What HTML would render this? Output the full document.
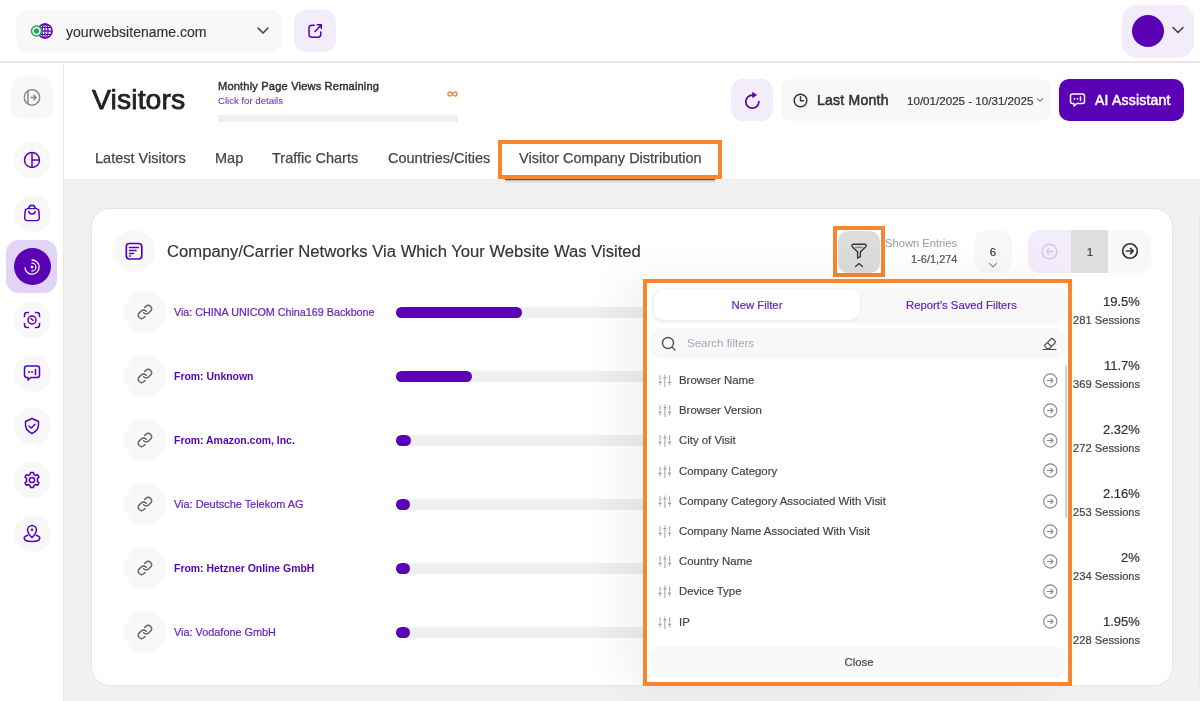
<!DOCTYPE html>
<html><head><meta charset="utf-8"><style>
html,body{margin:0;padding:0;}
body{width:1200px;height:701px;overflow:hidden;position:relative;background:#fff;font-family:"Liberation Sans",sans-serif;}
.t{position:absolute;line-height:0;white-space:nowrap;will-change:transform;}
.b{position:absolute;box-sizing:border-box;}
</style></head><body>
<div class="b" style="left:0px;top:61.4px;width:1200px;height:1.4px;background:#e8e8e8;border-radius:0px;"></div>
<div class="b" style="left:16px;top:10px;width:266px;height:42px;background:#f8f8f8;border-radius:12px;"></div>
<svg class="b" style="left:28px;top:21px;" width="28" height="20" viewBox="0 0 28 20" fill="none">
<circle cx="17" cy="10" r="7" stroke="#5a00b5" stroke-width="1.6" fill="#fff"/>
<ellipse cx="17" cy="10" rx="3" ry="7" stroke="#5a00b5" stroke-width="1.3"/>
<line x1="10" y1="10" x2="24" y2="10" stroke="#5a00b5" stroke-width="1.3"/>
<line x1="11" y1="6.5" x2="23" y2="6.5" stroke="#5a00b5" stroke-width="1.1"/>
<line x1="11" y1="13.5" x2="23" y2="13.5" stroke="#5a00b5" stroke-width="1.1"/>
<line x1="17" y1="3" x2="17" y2="17" stroke="#5a00b5" stroke-width="1.1"/>
<circle cx="8.5" cy="10" r="5" stroke="#1fa865" stroke-width="1.6" fill="#fff"/>
<circle cx="8.5" cy="10" r="2.7" fill="#1fa865"/>
</svg>
<div class="t" style="left:66.00px;top:31.83px;font-size:14.06px;color:#333;font-weight:400;-webkit-text-stroke:0.15px #333;">yourwebsitename.com</div>
<svg class="b" style="left:255px;top:25px;" width="16" height="12" viewBox="0 0 16 12" fill="none"><path d="M3 3 L8 8 L13 3" stroke="#444" stroke-width="1.6" stroke-linecap="round" stroke-linejoin="round"/></svg>
<div class="b" style="left:294px;top:10px;width:42px;height:42px;background:#f2ecfb;border-radius:12px;"></div>
<svg class="b" style="left:306px;top:22px;" width="18" height="18" viewBox="0 0 18 18" fill="none"><path d="M8.3 3.3 H6 Q3 3.3 3 6.3 V12.3 Q3 15.3 6 15.3 H11.8 Q14.8 15.3 14.8 12.3 V10" stroke="#5a00b5" stroke-width="1.5" stroke-linecap="round"/><path d="M9 9.5 L15 3.2 M11.3 2.8 H15.3 V6.6" stroke="#5a00b5" stroke-width="1.5" stroke-linecap="round" stroke-linejoin="round"/></svg>
<div class="b" style="left:1122px;top:5px;width:72px;height:53px;background:#f2ecfb;border-radius:15px;"></div>
<div class="b" style="left:1132px;top:15px;width:32px;height:32px;background:#5a00b5;border-radius:16px;"></div>
<svg class="b" style="left:1170px;top:24px;" width="16" height="12" viewBox="0 0 16 12" fill="none"><path d="M3 3.5 L8 8.5 L13 3.5" stroke="#444" stroke-width="1.6" stroke-linecap="round" stroke-linejoin="round"/></svg>
<div class="b" style="left:63px;top:62px;width:1px;height:639px;background:#e8e8e8;border-radius:0px;"></div>
<div class="b" style="left:11px;top:76px;width:42px;height:43px;background:#f8f8f8;border-radius:13px;"></div>
<svg class="b" style="left:22px;top:87px;" width="20" height="21" viewBox="0 0 20 21" fill="none"><circle cx="10" cy="10.5" r="7.7" stroke="#888" stroke-width="1.5"/><line x1="6" y1="3.5" x2="6" y2="17.5" stroke="#888" stroke-width="1.5"/><path d="M9 10.5 H14 M11.8 8.2 L14.2 10.5 L11.8 12.8" stroke="#888" stroke-width="1.5" stroke-linecap="round" stroke-linejoin="round"/></svg>
<div class="b" style="left:13.5px;top:141.5px;width:37px;height:37px;background:#f8f8f8;border-radius:18.5px;"></div>
<div class="b" style="left:13.5px;top:194.5px;width:37px;height:37px;background:#f8f8f8;border-radius:18.5px;"></div>
<div class="b" style="left:6px;top:240px;width:51px;height:53px;background:#e2d4f6;border-radius:13px;"></div>
<div class="b" style="left:13.5px;top:248.0px;width:37px;height:37px;background:#5a00b5;border-radius:18.5px;"></div>
<div class="b" style="left:13.5px;top:301.5px;width:37px;height:37px;background:#f8f8f8;border-radius:18.5px;"></div>
<div class="b" style="left:13.5px;top:354.5px;width:37px;height:37px;background:#f8f8f8;border-radius:18.5px;"></div>
<div class="b" style="left:13.5px;top:407.5px;width:37px;height:37px;background:#f8f8f8;border-radius:18.5px;"></div>
<div class="b" style="left:13.5px;top:461.5px;width:37px;height:37px;background:#f8f8f8;border-radius:18.5px;"></div>
<div class="b" style="left:13.5px;top:514.5px;width:37px;height:37px;background:#f8f8f8;border-radius:18.5px;"></div>
<svg class="b" style="left:22px;top:150px;" width="20" height="20" viewBox="0 0 20 20" fill="none"><circle cx="10" cy="10" r="7.5" stroke="#5a00b5" stroke-width="1.5"/><line x1="10" y1="2.5" x2="10" y2="17.5" stroke="#5a00b5" stroke-width="1.5"/><line x1="10" y1="10" x2="17.5" y2="10" stroke="#5a00b5" stroke-width="1.5"/></svg>
<svg class="b" style="left:22px;top:203px;" width="20" height="20" viewBox="0 0 20 20" fill="none"><path d="M6 5.6 H14 Q16.6 5.6 16.9 8.2 L17.3 14.6 Q17.5 17.6 14.5 17.6 H5.5 Q2.5 17.6 2.7 14.6 L3.1 8.2 Q3.4 5.6 6 5.6 Z" stroke="#5a00b5" stroke-width="1.45" stroke-linejoin="round"/><path d="M6.8 5.6 Q7 2.3 10 2.3 Q13 2.3 13.2 5.6" stroke="#5a00b5" stroke-width="1.5"/><path d="M6.8 8.6 Q7.2 10.9 10 10.9 Q12.8 10.9 13.2 8.6" stroke="#5a00b5" stroke-width="1.5" stroke-linecap="round"/></svg>
<svg class="b" style="left:22px;top:256.5px;" width="20" height="20" viewBox="0 0 20 20" fill="none"><circle cx="10" cy="10.1" r="1.4" fill="#fff"/><path d="M10 6.2 A3.9 3.9 0 0 1 9.9 14" stroke="#fff" stroke-width="1.3" stroke-linecap="round"/><path d="M10 3 A7.1 7.1 0 1 1 2.95 10.8" stroke="#fff" stroke-width="1.3" stroke-linecap="round"/></svg>
<svg class="b" style="left:22px;top:310px;" width="20" height="20" viewBox="0 0 20 20" fill="none"><path d="M2.5 6.5 V5 Q2.5 2.5 5 2.5 H6.5 M13.5 2.5 H15 Q17.5 2.5 17.5 5 V6.5 M17.5 13.5 V15 Q17.5 17.5 15 17.5 H13.5 M6.5 17.5 H5 Q2.5 17.5 2.5 15 V13.5" stroke="#5a00b5" stroke-width="1.5" stroke-linecap="round"/><circle cx="10" cy="10" r="4" stroke="#5a00b5" stroke-width="1.5"/><line x1="9" y1="8.5" x2="11" y2="10.5" stroke="#5a00b5" stroke-width="1.5" stroke-linecap="round"/></svg>
<svg class="b" style="left:22px;top:363px;" width="20" height="20" viewBox="0 0 20 20" fill="none"><path d="M5 3 H15 Q17.5 3 17.5 5.5 V12 Q17.5 14.5 15 14.5 H9 L6 17 V14.5 H5 Q2.5 14.5 2.5 12 V5.5 Q2.5 3 5 3 Z" stroke="#5a00b5" stroke-width="1.5" stroke-linejoin="round"/><circle cx="7" cy="9" r="1" fill="#5a00b5"/><circle cx="10" cy="9" r="1" fill="#5a00b5"/><line x1="13.5" y1="6.5" x2="13.5" y2="11.5" stroke="#5a00b5" stroke-width="1.5" stroke-linecap="round"/></svg>
<svg class="b" style="left:22px;top:416px;" width="20" height="20" viewBox="0 0 20 20" fill="none"><path d="M10 2.5 L16.5 5.5 Q17 9.5 15.5 13 Q13.5 16 10 17.5 Q6.5 16 4.5 13 Q3 9.5 3.5 5.5 Z" stroke="#5a00b5" stroke-width="1.5" stroke-linejoin="round"/><path d="M7 10 L9.2 12 L13 8.3" stroke="#5a00b5" stroke-width="1.5" stroke-linecap="round" stroke-linejoin="round"/></svg>
<svg class="b" style="left:22px;top:470px;" width="20" height="20" viewBox="0 0 20 20" fill="none"><path d="M8.6 2.5 H11.4 L11.9 4.6 L13.6 5.5 L15.6 4.7 L17 7.1 L15.4 8.6 V11.4 L17 12.9 L15.6 15.3 L13.6 14.5 L11.9 15.4 L11.4 17.5 H8.6 L8.1 15.4 L6.4 14.5 L4.4 15.3 L3 12.9 L4.6 11.4 V8.6 L3 7.1 L4.4 4.7 L6.4 5.5 L8.1 4.6 Z" stroke="#5a00b5" stroke-width="1.5" stroke-linejoin="round"/><circle cx="10" cy="10" r="2.6" stroke="#5a00b5" stroke-width="1.5"/></svg>
<svg class="b" style="left:22px;top:523px;" width="20" height="20" viewBox="0 0 20 20" fill="none"><path d="M10 14.6 Q5.6 10.2 5.6 6.9 A4.4 4.4 0 0 1 14.4 6.9 Q14.4 10.2 10 14.6 Z" stroke="#5a00b5" stroke-width="1.5" stroke-linejoin="round"/><circle cx="10" cy="6.8" r="1.3" fill="#5a00b5"/><path d="M5.8 12.3 Q2.2 13.3 2.2 15.2 Q2.2 18.4 10 18.4 Q17.8 18.4 17.8 15.2 Q17.8 13.3 14.2 12.3" stroke="#5a00b5" stroke-width="1.5" stroke-linecap="round"/></svg>
<div class="t" style="left:91.60px;top:98.86px;font-size:28.4px;color:#222;font-weight:400;letter-spacing:0.1px;-webkit-text-stroke:0.75px #222;">Visitors</div>
<div class="t" style="left:218.00px;top:86.05px;font-size:11.1px;color:#333;font-weight:400;letter-spacing:0.17px;-webkit-text-stroke:0.45px #333;">Monthly Page Views Remaining</div>
<div class="t" style="left:218.00px;top:100.57px;font-size:9.6px;color:#6320c4;font-weight:400;">Click for details</div>
<svg class="b" style="left:446px;top:90px;" width="13" height="8" viewBox="0 0 13 8" fill="none"><path d="M6.5 4 C5 1.3 2 1.3 2 4 C2 6.7 5 6.7 6.5 4 C8 1.3 11 1.3 11 4 C11 6.7 8 6.7 6.5 4 Z" stroke="#f8852f" stroke-width="1.35"/></svg>
<div class="b" style="left:218px;top:114.7px;width:240px;height:7px;background:#efefef;border-radius:1px;"></div>
<div class="b" style="left:731px;top:79px;width:42px;height:42px;background:#f2ecfb;border-radius:12px;"></div>
<svg class="b" style="left:742px;top:89.6px;" width="20" height="20" viewBox="0 0 20 20" fill="none"><path d="M16.8 11.7 A6.5 6.5 0 1 1 10.3 5.2 H11" stroke="#5a00b5" stroke-width="1.7" stroke-linecap="round"/><path d="M10.6 2.4 L14.6 5 L10.6 7.6 Z" fill="#5a00b5" stroke="#5a00b5" stroke-width="0.8" stroke-linejoin="round"/></svg>
<div class="b" style="left:781px;top:79px;width:270px;height:42px;background:#f8f8f8;border-radius:12px;"></div>
<svg class="b" style="left:791.6px;top:91.8px;" width="17" height="17" viewBox="0 0 17 17" fill="none"><circle cx="8.5" cy="8.5" r="6.3" stroke="#333" stroke-width="1.5"/><path d="M8.5 4.8 V8.8 H11.6" stroke="#333" stroke-width="1.5" stroke-linecap="round" stroke-linejoin="round"/></svg>
<div class="t" style="left:816.70px;top:100.35px;font-size:14px;color:#333;font-weight:400;letter-spacing:0.25px;-webkit-text-stroke:0.55px #333;">Last Month</div>
<div class="t" style="left:907.00px;top:100.58px;font-size:11.6px;color:#333;font-weight:400;-webkit-text-stroke:0.2px #333;">10/01/2025 - 10/31/2025</div>
<svg class="b" style="left:1035px;top:96px;" width="10" height="8" viewBox="0 0 10 8" fill="none"><path d="M2.3 2.8 L5 5.3 L7.7 2.8" stroke="#444" stroke-width="1" stroke-linecap="round" stroke-linejoin="round"/></svg>
<div class="b" style="left:1059px;top:79px;width:125px;height:42px;background:#5a00b5;border-radius:10px;"></div>
<svg class="b" style="left:1069px;top:92px;" width="17" height="16" viewBox="0 0 17 16" fill="none"><path d="M3.5 2 H13.5 Q15.5 2 15.5 4 V9.5 Q15.5 11.5 13.5 11.5 H8 L5 14 V11.5 H3.5 Q1.5 11.5 1.5 9.5 V4 Q1.5 2 3.5 2 Z" stroke="#fff" stroke-width="1.5" stroke-linejoin="round"/><circle cx="5.5" cy="6.8" r="0.9" fill="#fff"/><circle cx="8.5" cy="6.8" r="0.9" fill="#fff"/><line x1="11.5" y1="5" x2="11.5" y2="8.6" stroke="#fff" stroke-width="1.5" stroke-linecap="round"/></svg>
<div class="t" style="left:1095.00px;top:100.35px;font-size:14px;color:#fff;font-weight:400;letter-spacing:0.2px;-webkit-text-stroke:0.5px #fff;">AI Assistant</div>
<div class="t" style="left:94.70px;top:157.78px;font-size:14.5px;color:#474747;font-weight:400;-webkit-text-stroke:0.25px #474747;">Latest Visitors</div>
<div class="t" style="left:215.20px;top:157.78px;font-size:14.5px;color:#474747;font-weight:400;-webkit-text-stroke:0.25px #474747;">Map</div>
<div class="t" style="left:271.50px;top:157.78px;font-size:14.5px;color:#474747;font-weight:400;-webkit-text-stroke:0.25px #474747;">Traffic Charts</div>
<div class="t" style="left:387.50px;top:157.78px;font-size:14.5px;color:#474747;font-weight:400;-webkit-text-stroke:0.25px #474747;">Countries/Cities</div>
<div class="t" style="left:519.30px;top:157.78px;font-size:14.5px;color:#474747;font-weight:400;-webkit-text-stroke:0.25px #474747;">Visitor Company Distribution</div>
<div class="b" style="left:64px;top:179px;width:1136px;height:522px;background:#f1f1f1;border-radius:0px;"></div>
<div class="b" style="left:505px;top:177px;width:210px;height:2.5px;background:#555;border-radius:0px;box-shadow:0 1px 3px rgba(0,0,0,0.3);"></div>
<div class="b" style="left:498px;top:140px;width:224px;height:38.8px;border:4px solid #f8852f;"></div>
<div class="b" style="left:91.3px;top:208px;width:1081.5px;height:478px;background:#fff;border:1px solid #e6e6e6;border-radius:19px;"></div>
<div class="b" style="left:1199px;top:209px;width:10px;height:480px;background:#e9e9e9;border-radius:6px;"></div>
<div class="b" style="left:113px;top:230px;width:42px;height:42px;background:#f8f8f8;border-radius:21px;"></div>
<svg class="b" style="left:124px;top:241px;" width="20" height="20" viewBox="0 0 20 20" fill="none"><rect x="2.3" y="2.5" width="15.5" height="15.5" rx="3.2" stroke="#5a00b5" stroke-width="1.7"/><line x1="5.5" y1="6.5" x2="14.5" y2="6.5" stroke="#5a00b5" stroke-width="1.6" stroke-linecap="round"/><line x1="5.5" y1="9.5" x2="12" y2="9.5" stroke="#5a00b5" stroke-width="1.6" stroke-linecap="round"/><line x1="5.5" y1="12.5" x2="9.5" y2="12.5" stroke="#5a00b5" stroke-width="1.6" stroke-linecap="round"/><line x1="5.5" y1="15" x2="6.5" y2="15" stroke="#5a00b5" stroke-width="1.4" stroke-linecap="round"/></svg>
<div class="t" style="left:167.00px;top:251.73px;font-size:16.65px;color:#333;font-weight:400;-webkit-text-stroke:0.15px #333;">Company/Carrier Networks Via Which Your Website Was Visited</div>
<div class="b" style="left:833px;top:226px;width:52px;height:50.7px;border:4px solid #f8852f;"></div>
<div class="b" style="left:838px;top:231px;width:42px;height:42px;background:#dcdcdc;border-radius:10px;"></div>
<svg class="b" style="left:850px;top:242px;" width="18" height="18" viewBox="0 0 18 18" fill="none"><path d="M4 2.3 H14.5 Q16.6 2.3 16.1 4 Q15.6 5.2 14.3 6.2 L10.4 9.8 V14.6 L7.6 16.1 V9.8 L3.7 6.2 Q2.4 5.2 1.9 4 Q1.4 2.3 4 2.3 Z" stroke="#333" stroke-width="1.4" stroke-linejoin="round"/><ellipse cx="9" cy="5.4" rx="4.3" ry="0.9" fill="#8a8a8a"/></svg>
<svg class="b" style="left:853px;top:261px;" width="12" height="8" viewBox="0 0 12 8" fill="none"><path d="M2.5 5.5 L6 2.5 L9.5 5.5" stroke="#333" stroke-width="1.2" stroke-linecap="round" stroke-linejoin="round"/></svg>
<div class="t" style="right:242.50px;text-align:right;top:243.12px;font-size:11.2px;color:#999;font-weight:400;">Shown Entries</div>
<div class="t" style="right:242.50px;text-align:right;top:259.49px;font-size:11px;color:#555;font-weight:400;-webkit-text-stroke:0.2px #555;">1-6/1,274</div>
<div class="b" style="left:974px;top:230px;width:38px;height:43px;background:#f8f8f8;border-radius:12px;"></div>
<div class="t" style="left:693.00px;width:600px;text-align:center;top:252.02px;font-size:11.5px;color:#333;font-weight:400;-webkit-text-stroke:0.15px #333;">6</div>
<svg class="b" style="left:987px;top:260.5px;" width="12" height="9" viewBox="0 0 12 9" fill="none"><path d="M2.5 2.5 L6 5.8 L9.5 2.5" stroke="#555" stroke-width="1" stroke-linecap="round" stroke-linejoin="round"/></svg>
<div class="b" style="left:1028px;top:230px;width:123px;height:43px;border-radius:12px;overflow:hidden;background:#f8f8f8;"><div style="position:absolute;left:0;top:0;width:43px;height:43px;background:#f2ecfb"></div><div style="position:absolute;left:43px;top:0;width:37px;height:43px;background:#dedede"></div></div>
<svg class="b" style="left:1041px;top:243px;" width="18" height="18" viewBox="0 0 18 18" fill="none"><circle cx="8.5" cy="8.5" r="7.3" stroke="#d8c4f3" stroke-width="1.5"/><path d="M12 8.5 H5.5 M8 6 L5.5 8.5 L8 11" stroke="#d8c4f3" stroke-width="1.5" stroke-linecap="round" stroke-linejoin="round"/></svg>
<div class="t" style="left:789.50px;width:600px;text-align:center;top:252.02px;font-size:11.5px;color:#333;font-weight:400;-webkit-text-stroke:0.15px #333;">1</div>
<svg class="b" style="left:1121px;top:242px;" width="18" height="18" viewBox="0 0 18 18" fill="none"><circle cx="9" cy="9" r="7.3" stroke="#333" stroke-width="1.6"/><path d="M5.5 9 H12 M9.5 6.3 L12.2 9 L9.5 11.7" stroke="#333" stroke-width="1.7" stroke-linecap="round" stroke-linejoin="round"/></svg>
<div class="b" style="left:124px;top:290.75px;width:42px;height:42px;background:#f8f8f8;border-radius:21px;"></div>
<svg class="b" style="left:136.8px;top:303.9px;" width="17" height="17" viewBox="0 0 17 17" fill="none"><g transform="scale(0.66)"><path d="M10 13a5 5 0 0 0 7.54.54l3-3a5 5 0 0 0-7.07-7.07l-1.72 1.71" stroke="#666" stroke-width="2.2" stroke-linecap="round" stroke-linejoin="round"/><path d="M14 11a5 5 0 0 0-7.54-.54l-3 3a5 5 0 0 0 7.07 7.07l1.71-1.71" stroke="#666" stroke-width="2.2" stroke-linecap="round" stroke-linejoin="round"/></g></svg>
<div class="t" style="left:174.00px;top:311.78px;font-size:10.75px;color:#6a22c4;font-weight:400;-webkit-text-stroke:0.2px #6a22c4;">Via: CHINA UNICOM China169 Backbone</div>
<div class="b" style="left:396px;top:307px;width:646px;height:10.5px;background:#efefef;border-radius:6px;"></div>
<div class="b" style="left:396px;top:306.5px;width:126px;height:11px;background:#5a00b5;border-radius:6px;"></div>
<div class="t" style="right:60.00px;text-align:right;top:302.10px;font-size:13px;color:#333;font-weight:400;-webkit-text-stroke:0.2px #333;">19.5%</div>
<div class="t" style="right:60.00px;text-align:right;top:319.82px;font-size:11.2px;color:#444;font-weight:400;-webkit-text-stroke:0.2px #444;">281 Sessions</div>
<div class="b" style="left:124px;top:354.75px;width:42px;height:42px;background:#f8f8f8;border-radius:21px;"></div>
<svg class="b" style="left:136.8px;top:367.9px;" width="17" height="17" viewBox="0 0 17 17" fill="none"><g transform="scale(0.66)"><path d="M10 13a5 5 0 0 0 7.54.54l3-3a5 5 0 0 0-7.07-7.07l-1.72 1.71" stroke="#666" stroke-width="2.2" stroke-linecap="round" stroke-linejoin="round"/><path d="M14 11a5 5 0 0 0-7.54-.54l-3 3a5 5 0 0 0 7.07 7.07l1.71-1.71" stroke="#666" stroke-width="2.2" stroke-linecap="round" stroke-linejoin="round"/></g></svg>
<div class="t" style="left:174.00px;top:376.63px;font-size:10.45px;color:#5a00b5;font-weight:700;">From: Unknown</div>
<div class="b" style="left:396px;top:371px;width:646px;height:10.5px;background:#efefef;border-radius:6px;"></div>
<div class="b" style="left:396px;top:370.5px;width:75.5px;height:11px;background:#5a00b5;border-radius:6px;"></div>
<div class="t" style="right:60.00px;text-align:right;top:366.10px;font-size:13px;color:#333;font-weight:400;-webkit-text-stroke:0.2px #333;">11.7%</div>
<div class="t" style="right:60.00px;text-align:right;top:383.82px;font-size:11.2px;color:#444;font-weight:400;-webkit-text-stroke:0.2px #444;">369 Sessions</div>
<div class="b" style="left:124px;top:418.75px;width:42px;height:42px;background:#f8f8f8;border-radius:21px;"></div>
<svg class="b" style="left:136.8px;top:431.9px;" width="17" height="17" viewBox="0 0 17 17" fill="none"><g transform="scale(0.66)"><path d="M10 13a5 5 0 0 0 7.54.54l3-3a5 5 0 0 0-7.07-7.07l-1.72 1.71" stroke="#666" stroke-width="2.2" stroke-linecap="round" stroke-linejoin="round"/><path d="M14 11a5 5 0 0 0-7.54-.54l-3 3a5 5 0 0 0 7.07 7.07l1.71-1.71" stroke="#666" stroke-width="2.2" stroke-linecap="round" stroke-linejoin="round"/></g></svg>
<div class="t" style="left:174.00px;top:440.63px;font-size:10.45px;color:#5a00b5;font-weight:700;">From: Amazon.com, Inc.</div>
<div class="b" style="left:396px;top:435px;width:646px;height:10.5px;background:#efefef;border-radius:6px;"></div>
<div class="b" style="left:396px;top:434.5px;width:15px;height:11px;background:#5a00b5;border-radius:6px;"></div>
<div class="t" style="right:60.00px;text-align:right;top:430.10px;font-size:13px;color:#333;font-weight:400;-webkit-text-stroke:0.2px #333;">2.32%</div>
<div class="t" style="right:60.00px;text-align:right;top:447.82px;font-size:11.2px;color:#444;font-weight:400;-webkit-text-stroke:0.2px #444;">272 Sessions</div>
<div class="b" style="left:124px;top:482.75px;width:42px;height:42px;background:#f8f8f8;border-radius:21px;"></div>
<svg class="b" style="left:136.8px;top:495.9px;" width="17" height="17" viewBox="0 0 17 17" fill="none"><g transform="scale(0.66)"><path d="M10 13a5 5 0 0 0 7.54.54l3-3a5 5 0 0 0-7.07-7.07l-1.72 1.71" stroke="#666" stroke-width="2.2" stroke-linecap="round" stroke-linejoin="round"/><path d="M14 11a5 5 0 0 0-7.54-.54l-3 3a5 5 0 0 0 7.07 7.07l1.71-1.71" stroke="#666" stroke-width="2.2" stroke-linecap="round" stroke-linejoin="round"/></g></svg>
<div class="t" style="left:174.00px;top:503.71px;font-size:10.93px;color:#6a22c4;font-weight:400;-webkit-text-stroke:0.2px #6a22c4;">Via: Deutsche Telekom AG</div>
<div class="b" style="left:396px;top:499px;width:646px;height:10.5px;background:#efefef;border-radius:6px;"></div>
<div class="b" style="left:396px;top:498.5px;width:14px;height:11px;background:#5a00b5;border-radius:6px;"></div>
<div class="t" style="right:60.00px;text-align:right;top:494.10px;font-size:13px;color:#333;font-weight:400;-webkit-text-stroke:0.2px #333;">2.16%</div>
<div class="t" style="right:60.00px;text-align:right;top:511.82px;font-size:11.2px;color:#444;font-weight:400;-webkit-text-stroke:0.2px #444;">253 Sessions</div>
<div class="b" style="left:124px;top:546.75px;width:42px;height:42px;background:#f8f8f8;border-radius:21px;"></div>
<svg class="b" style="left:136.8px;top:559.9px;" width="17" height="17" viewBox="0 0 17 17" fill="none"><g transform="scale(0.66)"><path d="M10 13a5 5 0 0 0 7.54.54l3-3a5 5 0 0 0-7.07-7.07l-1.72 1.71" stroke="#666" stroke-width="2.2" stroke-linecap="round" stroke-linejoin="round"/><path d="M14 11a5 5 0 0 0-7.54-.54l-3 3a5 5 0 0 0 7.07 7.07l1.71-1.71" stroke="#666" stroke-width="2.2" stroke-linecap="round" stroke-linejoin="round"/></g></svg>
<div class="t" style="left:174.00px;top:568.63px;font-size:10.45px;color:#5a00b5;font-weight:700;">From: Hetzner Online GmbH</div>
<div class="b" style="left:396px;top:563px;width:646px;height:10.5px;background:#efefef;border-radius:6px;"></div>
<div class="b" style="left:396px;top:562.5px;width:14px;height:11px;background:#5a00b5;border-radius:6px;"></div>
<div class="t" style="right:60.00px;text-align:right;top:558.10px;font-size:13px;color:#333;font-weight:400;-webkit-text-stroke:0.2px #333;">2%</div>
<div class="t" style="right:60.00px;text-align:right;top:575.82px;font-size:11.2px;color:#444;font-weight:400;-webkit-text-stroke:0.2px #444;">234 Sessions</div>
<div class="b" style="left:124px;top:610.75px;width:42px;height:42px;background:#f8f8f8;border-radius:21px;"></div>
<svg class="b" style="left:136.8px;top:623.9px;" width="17" height="17" viewBox="0 0 17 17" fill="none"><g transform="scale(0.66)"><path d="M10 13a5 5 0 0 0 7.54.54l3-3a5 5 0 0 0-7.07-7.07l-1.72 1.71" stroke="#666" stroke-width="2.2" stroke-linecap="round" stroke-linejoin="round"/><path d="M14 11a5 5 0 0 0-7.54-.54l-3 3a5 5 0 0 0 7.07 7.07l1.71-1.71" stroke="#666" stroke-width="2.2" stroke-linecap="round" stroke-linejoin="round"/></g></svg>
<div class="t" style="left:174.00px;top:631.73px;font-size:10.88px;color:#6a22c4;font-weight:400;-webkit-text-stroke:0.2px #6a22c4;">Via: Vodafone GmbH</div>
<div class="b" style="left:396px;top:627px;width:646px;height:10.5px;background:#efefef;border-radius:6px;"></div>
<div class="b" style="left:396px;top:626.5px;width:14px;height:11px;background:#5a00b5;border-radius:6px;"></div>
<div class="t" style="right:60.00px;text-align:right;top:622.10px;font-size:13px;color:#333;font-weight:400;-webkit-text-stroke:0.2px #333;">1.95%</div>
<div class="t" style="right:60.00px;text-align:right;top:639.82px;font-size:11.2px;color:#444;font-weight:400;-webkit-text-stroke:0.2px #444;">228 Sessions</div>
<div class="b" style="left:643px;top:279px;width:429px;height:407px;border:4px solid #f8852f;background:#fff;box-shadow:-20px 0 40px rgba(0,0,0,0.06);"></div>
<div class="b" style="left:651px;top:287px;width:416px;height:37px;background:#f8f8f8;border-radius:12px;"></div>
<div class="b" style="left:654px;top:289.3px;width:205.5px;height:31.2px;background:#fff;border-radius:11px;box-shadow:0 1px 3px rgba(0,0,0,0.06);"></div>
<div class="t" style="left:456.50px;width:600px;text-align:center;top:305.08px;font-size:11.3px;color:#6a22c4;font-weight:400;-webkit-text-stroke:0.2px #6a22c4;">New Filter</div>
<div class="t" style="left:906.00px;top:305.08px;font-size:11.3px;color:#6a22c4;font-weight:400;-webkit-text-stroke:0.2px #6a22c4;">Report's Saved Filters</div>
<div class="b" style="left:651px;top:328px;width:415px;height:31px;background:#f8f8f8;border-radius:10px;"></div>
<svg class="b" style="left:659.5px;top:334.6px;" width="18" height="18" viewBox="0 0 18 18" fill="none"><circle cx="8" cy="8" r="5.5" stroke="#555" stroke-width="1.4"/><path d="M12 12 L15 15" stroke="#555" stroke-width="1.4" stroke-linecap="round"/></svg>
<div class="t" style="left:687.00px;top:343.42px;font-size:11.5px;color:#a3a8b5;font-weight:400;">Search filters</div>
<svg class="b" style="left:1041px;top:335px;" width="17" height="17" viewBox="0 0 17 17" fill="none"><path d="M3.5 10.5 L10 4 Q11 3 12 4 L14 6 Q15 7 14 8 L8.5 13.5 H5.5 Z" stroke="#555" stroke-width="1.2" stroke-linejoin="round"/><path d="M6.3 7.5 L10.5 11.5" stroke="#555" stroke-width="1.2"/><path d="M2 14.5 H15" stroke="#555" stroke-width="1.2" stroke-linecap="round"/></svg>
<svg class="b" style="left:656px;top:371.9px;" width="17" height="16" viewBox="0 0 17 16" fill="none"><path d="M4.1 3.2 V8.4 M4.1 11.2 V13.3 M8.9 2.4 V4.8 M8.9 7 V15 M13.6 3.2 V8.4 M13.6 11.2 V13.3" stroke="#a8a8a8" stroke-width="1.1"/><path d="M2.7 10.2 H5.5 M7.5 5.8 H10.3 M12.2 10.2 H15" stroke="#999" stroke-width="1.4"/></svg>
<div class="t" style="left:679.00px;top:380.05px;font-size:11.4px;color:#444;font-weight:400;-webkit-text-stroke:0.2px #444;">Browser Name</div>
<svg class="b" style="left:1042px;top:371.79999999999995px;" width="17" height="17" viewBox="0 0 17 17" fill="none"><circle cx="8.3" cy="8.5" r="6.6" stroke="#888" stroke-width="1.1"/><path d="M5.3 8.5 H11 M8.8 6.3 L11 8.5 L8.8 10.7" stroke="#888" stroke-width="1.1" stroke-linecap="round" stroke-linejoin="round"/></svg>
<svg class="b" style="left:656px;top:402.09999999999997px;" width="17" height="16" viewBox="0 0 17 16" fill="none"><path d="M4.1 3.2 V8.4 M4.1 11.2 V13.3 M8.9 2.4 V4.8 M8.9 7 V15 M13.6 3.2 V8.4 M13.6 11.2 V13.3" stroke="#a8a8a8" stroke-width="1.1"/><path d="M2.7 10.2 H5.5 M7.5 5.8 H10.3 M12.2 10.2 H15" stroke="#999" stroke-width="1.4"/></svg>
<div class="t" style="left:679.00px;top:410.25px;font-size:11.4px;color:#444;font-weight:400;-webkit-text-stroke:0.2px #444;">Browser Version</div>
<svg class="b" style="left:1042px;top:401.99999999999994px;" width="17" height="17" viewBox="0 0 17 17" fill="none"><circle cx="8.3" cy="8.5" r="6.6" stroke="#888" stroke-width="1.1"/><path d="M5.3 8.5 H11 M8.8 6.3 L11 8.5 L8.8 10.7" stroke="#888" stroke-width="1.1" stroke-linecap="round" stroke-linejoin="round"/></svg>
<svg class="b" style="left:656px;top:432.29999999999995px;" width="17" height="16" viewBox="0 0 17 16" fill="none"><path d="M4.1 3.2 V8.4 M4.1 11.2 V13.3 M8.9 2.4 V4.8 M8.9 7 V15 M13.6 3.2 V8.4 M13.6 11.2 V13.3" stroke="#a8a8a8" stroke-width="1.1"/><path d="M2.7 10.2 H5.5 M7.5 5.8 H10.3 M12.2 10.2 H15" stroke="#999" stroke-width="1.4"/></svg>
<div class="t" style="left:679.00px;top:440.45px;font-size:11.4px;color:#444;font-weight:400;-webkit-text-stroke:0.2px #444;">City of Visit</div>
<svg class="b" style="left:1042px;top:432.19999999999993px;" width="17" height="17" viewBox="0 0 17 17" fill="none"><circle cx="8.3" cy="8.5" r="6.6" stroke="#888" stroke-width="1.1"/><path d="M5.3 8.5 H11 M8.8 6.3 L11 8.5 L8.8 10.7" stroke="#888" stroke-width="1.1" stroke-linecap="round" stroke-linejoin="round"/></svg>
<svg class="b" style="left:656px;top:462.5px;" width="17" height="16" viewBox="0 0 17 16" fill="none"><path d="M4.1 3.2 V8.4 M4.1 11.2 V13.3 M8.9 2.4 V4.8 M8.9 7 V15 M13.6 3.2 V8.4 M13.6 11.2 V13.3" stroke="#a8a8a8" stroke-width="1.1"/><path d="M2.7 10.2 H5.5 M7.5 5.8 H10.3 M12.2 10.2 H15" stroke="#999" stroke-width="1.4"/></svg>
<div class="t" style="left:679.00px;top:470.65px;font-size:11.4px;color:#444;font-weight:400;-webkit-text-stroke:0.2px #444;">Company Category</div>
<svg class="b" style="left:1042px;top:462.4px;" width="17" height="17" viewBox="0 0 17 17" fill="none"><circle cx="8.3" cy="8.5" r="6.6" stroke="#888" stroke-width="1.1"/><path d="M5.3 8.5 H11 M8.8 6.3 L11 8.5 L8.8 10.7" stroke="#888" stroke-width="1.1" stroke-linecap="round" stroke-linejoin="round"/></svg>
<svg class="b" style="left:656px;top:492.7px;" width="17" height="16" viewBox="0 0 17 16" fill="none"><path d="M4.1 3.2 V8.4 M4.1 11.2 V13.3 M8.9 2.4 V4.8 M8.9 7 V15 M13.6 3.2 V8.4 M13.6 11.2 V13.3" stroke="#a8a8a8" stroke-width="1.1"/><path d="M2.7 10.2 H5.5 M7.5 5.8 H10.3 M12.2 10.2 H15" stroke="#999" stroke-width="1.4"/></svg>
<div class="t" style="left:679.00px;top:500.85px;font-size:11.4px;color:#444;font-weight:400;-webkit-text-stroke:0.2px #444;">Company Category Associated With Visit</div>
<svg class="b" style="left:1042px;top:492.59999999999997px;" width="17" height="17" viewBox="0 0 17 17" fill="none"><circle cx="8.3" cy="8.5" r="6.6" stroke="#888" stroke-width="1.1"/><path d="M5.3 8.5 H11 M8.8 6.3 L11 8.5 L8.8 10.7" stroke="#888" stroke-width="1.1" stroke-linecap="round" stroke-linejoin="round"/></svg>
<svg class="b" style="left:656px;top:522.9px;" width="17" height="16" viewBox="0 0 17 16" fill="none"><path d="M4.1 3.2 V8.4 M4.1 11.2 V13.3 M8.9 2.4 V4.8 M8.9 7 V15 M13.6 3.2 V8.4 M13.6 11.2 V13.3" stroke="#a8a8a8" stroke-width="1.1"/><path d="M2.7 10.2 H5.5 M7.5 5.8 H10.3 M12.2 10.2 H15" stroke="#999" stroke-width="1.4"/></svg>
<div class="t" style="left:679.00px;top:531.05px;font-size:11.4px;color:#444;font-weight:400;-webkit-text-stroke:0.2px #444;">Company Name Associated With Visit</div>
<svg class="b" style="left:1042px;top:522.8px;" width="17" height="17" viewBox="0 0 17 17" fill="none"><circle cx="8.3" cy="8.5" r="6.6" stroke="#888" stroke-width="1.1"/><path d="M5.3 8.5 H11 M8.8 6.3 L11 8.5 L8.8 10.7" stroke="#888" stroke-width="1.1" stroke-linecap="round" stroke-linejoin="round"/></svg>
<svg class="b" style="left:656px;top:553.0999999999999px;" width="17" height="16" viewBox="0 0 17 16" fill="none"><path d="M4.1 3.2 V8.4 M4.1 11.2 V13.3 M8.9 2.4 V4.8 M8.9 7 V15 M13.6 3.2 V8.4 M13.6 11.2 V13.3" stroke="#a8a8a8" stroke-width="1.1"/><path d="M2.7 10.2 H5.5 M7.5 5.8 H10.3 M12.2 10.2 H15" stroke="#999" stroke-width="1.4"/></svg>
<div class="t" style="left:679.00px;top:561.25px;font-size:11.4px;color:#444;font-weight:400;-webkit-text-stroke:0.2px #444;">Country Name</div>
<svg class="b" style="left:1042px;top:552.9999999999999px;" width="17" height="17" viewBox="0 0 17 17" fill="none"><circle cx="8.3" cy="8.5" r="6.6" stroke="#888" stroke-width="1.1"/><path d="M5.3 8.5 H11 M8.8 6.3 L11 8.5 L8.8 10.7" stroke="#888" stroke-width="1.1" stroke-linecap="round" stroke-linejoin="round"/></svg>
<svg class="b" style="left:656px;top:583.3px;" width="17" height="16" viewBox="0 0 17 16" fill="none"><path d="M4.1 3.2 V8.4 M4.1 11.2 V13.3 M8.9 2.4 V4.8 M8.9 7 V15 M13.6 3.2 V8.4 M13.6 11.2 V13.3" stroke="#a8a8a8" stroke-width="1.1"/><path d="M2.7 10.2 H5.5 M7.5 5.8 H10.3 M12.2 10.2 H15" stroke="#999" stroke-width="1.4"/></svg>
<div class="t" style="left:679.00px;top:591.45px;font-size:11.4px;color:#444;font-weight:400;-webkit-text-stroke:0.2px #444;">Device Type</div>
<svg class="b" style="left:1042px;top:583.1999999999999px;" width="17" height="17" viewBox="0 0 17 17" fill="none"><circle cx="8.3" cy="8.5" r="6.6" stroke="#888" stroke-width="1.1"/><path d="M5.3 8.5 H11 M8.8 6.3 L11 8.5 L8.8 10.7" stroke="#888" stroke-width="1.1" stroke-linecap="round" stroke-linejoin="round"/></svg>
<svg class="b" style="left:656px;top:613.5px;" width="17" height="16" viewBox="0 0 17 16" fill="none"><path d="M4.1 3.2 V8.4 M4.1 11.2 V13.3 M8.9 2.4 V4.8 M8.9 7 V15 M13.6 3.2 V8.4 M13.6 11.2 V13.3" stroke="#a8a8a8" stroke-width="1.1"/><path d="M2.7 10.2 H5.5 M7.5 5.8 H10.3 M12.2 10.2 H15" stroke="#999" stroke-width="1.4"/></svg>
<div class="t" style="left:679.00px;top:621.65px;font-size:11.4px;color:#444;font-weight:400;-webkit-text-stroke:0.2px #444;">IP</div>
<svg class="b" style="left:1042px;top:613.4px;" width="17" height="17" viewBox="0 0 17 17" fill="none"><circle cx="8.3" cy="8.5" r="6.6" stroke="#888" stroke-width="1.1"/><path d="M5.3 8.5 H11 M8.8 6.3 L11 8.5 L8.8 10.7" stroke="#888" stroke-width="1.1" stroke-linecap="round" stroke-linejoin="round"/></svg>
<div class="b" style="left:1065px;top:365px;width:2px;height:153px;background:#d0d0d0;border-radius:1px;"></div>
<div class="b" style="left:651px;top:646px;width:415px;height:31.5px;background:#f8f8f8;border-radius:12px;"></div>
<div class="t" style="left:559.00px;width:600px;text-align:center;top:662.08px;font-size:11.3px;color:#444;font-weight:400;-webkit-text-stroke:0.2px #444;">Close</div>
</body></html>
